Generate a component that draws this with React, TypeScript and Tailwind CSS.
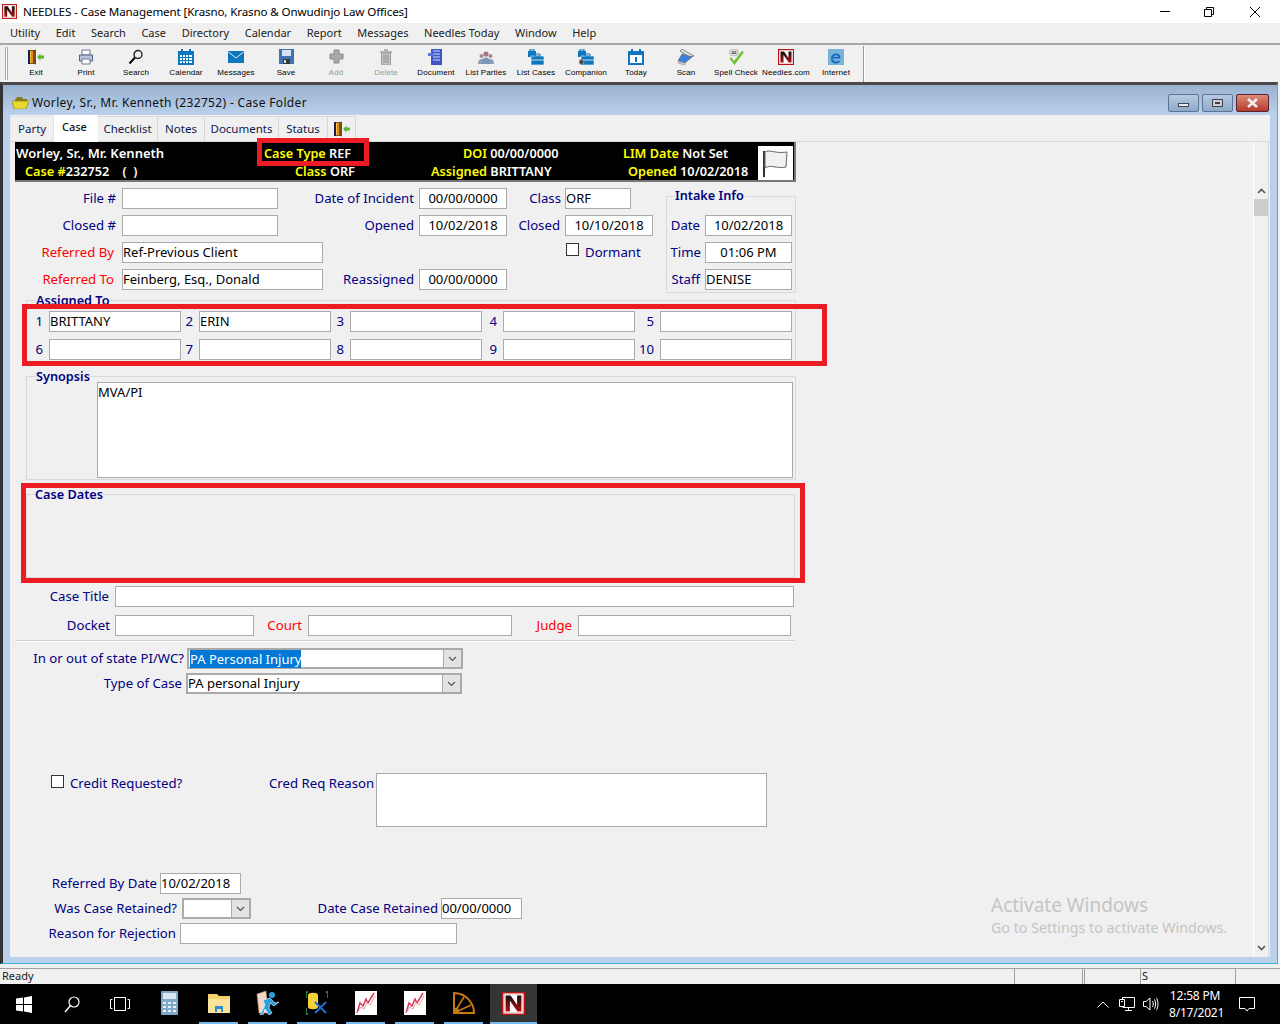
import type { ReactNode } from 'react';

const NAVY = 'text-[#000080]';

function NLogo({ size = 16 }: { size?: number }) {
  return (
    <svg width={size} height={size} viewBox="0 0 16 16" className="shrink-0">
      <defs>
        <linearGradient id="ng" x1="0" y1="0" x2="0" y2="1">
          <stop offset="0" stopColor="#111" />
          <stop offset="1" stopColor="#b40f0f" />
        </linearGradient>
      </defs>
      <rect x="0.5" y="0.5" width="15" height="15" fill="#fff" stroke="#b81414" />
      <rect x="1.5" y="1.5" width="13" height="13" fill="none" stroke="#e8b0b0" strokeWidth="0.6" />
      <path d="M2.5 2.5H6L10.5 9V2.5H13.5V13.5H10.8L5.5 6V13.5H2.5Z" fill="url(#ng)" />
    </svg>
  );
}

const Door = () => (
  <svg width="16" height="16" viewBox="0 0 16 16">
    <path d="M0 1H8V15H0Z" fill="#16204a" />
    <path d="M2 1.5H5.5V14.5H2Z" fill="#e08a1e" />
    <path d="M2 2H3V14H2Z" fill="#f2c24a" />
    <path d="M5.5 1.5L8 0.5V15.5L5.5 14.5Z" fill="#7a4a12" />
    <path d="M9 8L12.5 4.5V6.5H16V9.5H12.5V11.5Z" fill="#5cb832" />
  </svg>
);
const Printer = () => (
  <svg width="16" height="16" viewBox="0 0 16 16">
    <path d="M4 1H12V6H4Z" fill="#fff" stroke="#6d7896" />
    <path d="M1.5 6H14.5V12H1.5Z" fill="#b9c3dc" stroke="#55618a" />
    <path d="M4 10H12V15H4Z" fill="#fff" stroke="#6d7896" />
  </svg>
);
const Magnifier = () => (
  <svg width="16" height="16" viewBox="0 0 16 16">
    <circle cx="10" cy="5.5" r="4" fill="#e8f0f6" stroke="#222" strokeWidth="1.4" />
    <path d="M7 8.5L1.5 14.5" stroke="#111" strokeWidth="2.2" />
  </svg>
);
const CalendarIcon = ({ dots = true }: { dots?: boolean }) => (
  <svg width="16" height="16" viewBox="0 0 16 16">
    <path d="M0 2H16V16H0Z" fill="#0e76bc" />
    <path d="M3 0H5V3H3ZM11 0H13V3H11Z" fill="#0e76bc" />
    {dots ? (
      <path d="M2 6H4V8H2ZM5 6H7V8H5ZM8 6H10V8H8ZM11 6H14V8H11ZM2 9H4V11H2ZM5 9H7V11H5ZM8 9H10V11H8ZM11 9H14V11H11ZM2 12H4V14H2ZM5 12H7V14H5ZM8 12H10V14H8ZM11 12H14V14H11Z" fill="#fff" />
    ) : (
      <path d="M2 6H14V14H2Z" fill="#fff" />
    )}
    {!dots && <path d="M7 8H9V13H7Z" fill="#0e76bc" />}
  </svg>
);
const Envelope = () => (
  <svg width="16" height="12" viewBox="0 0 16 12" className="mt-[2px]">
    <path d="M0 0H16V12H0Z" fill="#0e76bc" />
    <path d="M0.5 1L8 7L15.5 1" fill="none" stroke="#d5ecf9" strokeWidth="1" />
  </svg>
);
const Floppy = () => (
  <svg width="15" height="15" viewBox="0 0 15 15">
    <path d="M0 0H15V15H0Z" fill="#3f73b5" />
    <path d="M3 1H12V7H3Z" fill="#d6e4f2" />
    <path d="M4 10H11V15H4Z" fill="#3a3a3a" />
    <path d="M5 11H7V14H5Z" fill="#ddd" />
  </svg>
);
const Plus = () => (
  <svg width="15" height="15" viewBox="0 0 15 15">
    <path d="M5 1H10V5H14V10H10V14H5V10H1V5H5Z" fill="#a8a8a8" stroke="#8c8c8c" />
  </svg>
);
const Trash = () => (
  <svg width="14" height="16" viewBox="0 0 14 16">
    <path d="M1 2H13V4H1ZM5 0H9V2H5Z" fill="#b5b5b5" />
    <path d="M2.5 4H11.5V16H2.5Z" fill="#c6c6c6" stroke="#9a9a9a" />
    <path d="M5 6V14M7 6V14M9 6V14" stroke="#8e8e8e" />
  </svg>
);
const DocIcon = () => (
  <svg width="16" height="16" viewBox="0 0 16 16">
    <path d="M3 0H14V16H3Z" fill="#3c55c4" />
    <path d="M5 2H12M5 5H12M5 8H12M5 11H12" stroke="#d4dcf5" />
    <path d="M0 4H6V7H0Z" fill="#5c76d8" />
  </svg>
);
const People = () => (
  <svg width="16" height="14" viewBox="0 0 16 14" className="mt-[2px]">
    <circle cx="3.5" cy="5" r="2" fill="#a08a96" />
    <circle cx="12.5" cy="5" r="2" fill="#a08a96" />
    <circle cx="8" cy="3" r="2.6" fill="#a87878" />
    <path d="M0 13C0 9 2 8 4 8S7 9 7 13Z" fill="#8ea2bd" />
    <path d="M9 13C9 9 11 8 12.5 8S16 9 16 13Z" fill="#8ea2bd" />
    <path d="M3.5 13C3.5 8 6 6.5 8 6.5S12.5 8 12.5 13Z" fill="#7d96b8" />
  </svg>
);
const Cases = ({ gear = false }: { gear?: boolean }) => (
  <svg width="16" height="16" viewBox="0 0 16 16">
    <path d="M0 2H8V8H0Z" fill="#0e76bc" />
    <path d="M2 0H6V2H2Z" fill="none" stroke="#0e76bc" />
    <path d="M3 7H16V16H3Z" fill="#0e76bc" stroke="#fff" strokeWidth="0.6" />
    <path d="M7 5H12V7H7Z" fill="none" stroke="#0e76bc" />
    <path d="M3 11H16" stroke="#bfe0f5" />
    {gear && <circle cx="3.5" cy="13" r="2.4" fill="#444" stroke="#999" strokeWidth="1" />}
  </svg>
);
const ScanIcon = () => (
  <svg width="16" height="16" viewBox="0 0 16 16">
    <path d="M4 0L16 7L12 8L2 2Z" fill="#dfe3ea" stroke="#555" strokeWidth="0.7" />
    <path d="M4 5L14 8L7 14L0 12Z" fill="#3d7fdc" stroke="#666" strokeWidth="0.7" />
    <path d="M0 12L7 14V16L0 14Z" fill="#cfd3da" stroke="#777" strokeWidth="0.5" />
  </svg>
);
const SpellIcon = () => (
  <svg width="16" height="16" viewBox="0 0 16 16">
    <ellipse cx="6" cy="3.5" rx="4.5" ry="3.3" fill="#eee" stroke="#999" strokeWidth="0.7" />
    <path d="M3.5 2.8H8.5M3.5 4.4H8.5" stroke="#444" strokeWidth="1" />
    <path d="M3 8L6 12L14 2L16 3L6.5 16L1.5 9.5Z" fill="#6cbf2f" />
  </svg>
);
const Ie = () => (
  <svg width="16" height="16" viewBox="0 0 16 16">
    <rect width="16" height="16" fill="#79b4d8" />
    <path d="M3 9.5H12.5C12.5 6 10.5 4.5 8 4.5S3 6.5 3 9.5C3 13 5.5 14.5 8 14.5C10 14.5 11.5 13.5 12.2 12H9.5C9 12.5 8.5 12.7 8 12.7C6.8 12.7 5.8 12 5.7 11H6ZM5.7 8C6 6.8 7 6.3 8 6.3S10 6.8 10.2 8Z" fill="#1467c5" />
  </svg>
);

const tools: { label: string; icon: ReactNode; off?: boolean }[] = [
  { label: 'Exit', icon: <Door /> },
  { label: 'Print', icon: <Printer /> },
  { label: 'Search', icon: <Magnifier /> },
  { label: 'Calendar', icon: <CalendarIcon /> },
  { label: 'Messages', icon: <Envelope /> },
  { label: 'Save', icon: <Floppy /> },
  { label: 'Add', icon: <Plus />, off: true },
  { label: 'Delete', icon: <Trash />, off: true },
  { label: 'Document', icon: <DocIcon /> },
  { label: 'List Parties', icon: <People /> },
  { label: 'List Cases', icon: <Cases /> },
  { label: 'Companion', icon: <Cases gear /> },
  { label: 'Today', icon: <CalendarIcon dots={false} /> },
  { label: 'Scan', icon: <ScanIcon /> },
  { label: 'Spell Check', icon: <SpellIcon /> },
  { label: 'Needles.com', icon: <NLogo /> },
  { label: 'Internet', icon: <Ie /> },
];

const menus = ['Utility', 'Edit', 'Search', 'Case', 'Directory', 'Calendar', 'Report', 'Messages', 'Needles Today', 'Window', 'Help'];

function Lbl({ className = '', children }: { className?: string; children: ReactNode }) {
  return <div className={`h-[21px] shrink-0 whitespace-nowrap text-right text-[13.2px] leading-[21px] ${NAVY} ${className}`}>{children}</div>;
}

function Field({ className = '', children }: { className?: string; children?: ReactNode }) {
  return <div className={`h-[21px] shrink-0 whitespace-nowrap border border-[#aaaaaa] bg-white leading-[19px] text-black ${className}`}>{children}</div>;
}

function Combo({ className = '', selected, children }: { className?: string; selected?: boolean; children?: ReactNode }) {
  return (
    <div className={`flex h-[21px] shrink-0 border-2 border-[#aaaaaa] bg-white leading-[17px] text-black ${className}`}>
      <div className="min-w-0 flex-1 whitespace-nowrap">
        {selected ? <span className="ml-px bg-[#0078d7] leading-[19px] text-white">{children}</span> : children}
      </div>
      <div className="flex w-[18px] items-center justify-center border-l border-[#aaaaaa] bg-[#e3e3e3]">
        <svg width="9" height="6" viewBox="0 0 9 6"><path d="M1 1L4.5 4.5L8 1" fill="none" stroke="#555" strokeWidth="1.2" /></svg>
      </div>
    </div>
  );
}

const Check = ({ className = '' }: { className?: string }) => (
  <div className={`h-[13px] w-[13px] shrink-0 border border-[#333] bg-white ${className}`} />
);

function Group({ title, className = '', legendClass = '', children }: { title: string; className?: string; legendClass?: string; children?: ReactNode }) {
  return (
    <fieldset className={`border border-[#d9d9d9] ${className}`}>
      <legend className={`h-[16px] text-[12.7px] font-semibold leading-[14px] ${NAVY} ${legendClass}`}>{title}</legend>
      {children}
    </fieldset>
  );
}

function AssignRow({ nums, names }: { nums: string[]; names: string[] }) {
  return (
    <div className="flex h-[21px]">
      <Lbl className="w-[16px]">{nums[0]}</Lbl>
      <Field className="ml-[6px] w-[132px]">{names[0]}</Field>
      <Lbl className="w-[12px]">{nums[1]}</Lbl>
      <Field className="ml-[6px] w-[132px]">{names[1]}</Field>
      <Lbl className="w-[13px]">{nums[2]}</Lbl>
      <Field className="ml-[6px] w-[132px]">{names[2]}</Field>
      <Lbl className="w-[15px]">{nums[3]}</Lbl>
      <Field className="ml-[6px] w-[132px]">{names[3]}</Field>
      <Lbl className="w-[19px]">{nums[4]}</Lbl>
      <Field className="ml-[6px] w-[132px]">{names[4]}</Field>
    </div>
  );
}

const WinBtn = ({ className, children }: { className: string; children: ReactNode }) => (
  <div className={`flex h-[18px] items-center justify-center rounded-[2px] border ${className}`}>{children}</div>
);

function TaskIcon({ active, on = true, children }: { active?: boolean; on?: boolean; children: ReactNode }) {
  return (
    <div className={`ml-[2px] flex h-[40px] w-[47px] flex-col items-center ${active ? 'bg-[#333537]' : ''}`}>
      <div className="flex min-h-0 flex-1 items-center justify-center">{children}</div>
      <div className={`h-[2px] ${active ? 'w-full' : 'w-[39px]'} ${on ? 'bg-[#76b9ed]' : ''}`} />
    </div>
  );
}

const Chart = () => (
  <svg width="22" height="24" viewBox="0 0 22 24">
    <rect width="22" height="24" fill="#fff" />
    <path d="M2 22L5 12L8 15L11 8L13 12L19 2" fill="none" stroke="#d63a52" strokeWidth="1.5" />
    <path d="M2 22L6 16L9 18L12 11L15 14L20 5" fill="none" stroke="#e79aa8" strokeWidth="1" />
  </svg>
);

export default function App() {
  return (
    <div className="relative flex h-[1024px] w-[1280px] flex-col overflow-hidden bg-[#f0f0f0] font-['Noto_Sans',sans-serif] text-[13px]">
      {/* main window title */}
      <div className="flex h-[23px] shrink-0 items-center bg-white pl-[2px] text-[11.6px] text-black">
        <NLogo size={15} />
        <span className="ml-[6px] tracking-[-0.13px]">NEEDLES - Case Management [Krasno, Krasno &amp; Onwudinjo Law Offices]</span>
        <div className="ml-auto flex items-center pr-[20px]">
          <div className="h-px w-[10px] bg-black" />
          <svg width="10" height="10" viewBox="0 0 10 10" className="ml-[34px]"><path d="M2.5 2.5V.5H9.5V7.5H7.5M.5 2.5H7.5V9.5H.5Z" fill="none" stroke="#000" /></svg>
          <svg width="10" height="10" viewBox="0 0 10 10" className="ml-[36px]"><path d="M0 0L10 10M10 0L0 10" stroke="#000" /></svg>
        </div>
      </div>
      {/* menu */}
      <div className="flex h-[20px] shrink-0 items-center gap-[15.6px] pl-[10px] text-[11px] text-[#222]">
        {menus.map((m) => (
          <span key={m}>{m}</span>
        ))}
      </div>
      {/* toolbar */}
      <div className="flex h-[39px] shrink-0 border-t-2 border-[#a8a8a8] pl-[5px]">
        <div className="my-[2px] w-[3px] border-x border-[#aaa] bg-white" />
        <div className="ml-[3px] flex w-[850px]">
          {tools.map((t) => (
            <div key={t.label} className="flex w-[50px] flex-col items-center pt-[4px]">
              <div className="flex h-[17px] items-start">{t.icon}</div>
              <div className={`mt-[2px] whitespace-nowrap font-['Liberation_Sans',sans-serif] text-[8px] leading-[10px] tracking-[0.1px] ${t.off ? 'text-[#999]' : 'text-black'}`}>{t.label}</div>
            </div>
          ))}
        </div>
        <div className="ml-[2px] mt-[1px] h-[36px] w-[2px] border-x border-l-[#999] border-r-white" />
      </div>
      {/* MDI child */}
      <div className="mr-[2px] flex min-h-0 flex-1 flex-col border-b border-l-[3px] border-r border-t-[3px] border-b-[#3fb5d6] border-l-[#333] border-r-[#3fb5d6] border-t-[#4a4a4a] bg-[#b9d1ea]">
        <div className="flex h-[30px] shrink-0 items-start bg-gradient-to-b from-[#9ab2d1] to-[#b9d1ea] pl-[9px] pr-[8px] pt-[9px]">
          <svg width="17" height="12" viewBox="0 0 17 12" className="mt-[3px]">
            <path d="M3 3L5 0H10L11 2H15V4H3Z" fill="#8a7a1e" />
            <path d="M0 4H17L14 12H2Z" fill="#e6d92b" stroke="#8a7a1e" strokeWidth="0.6" />
          </svg>
          <span className="ml-[3px] text-[12px] leading-[18px] tracking-[0.34px] text-[#111]">Worley, Sr., Mr. Kenneth (232752) - Case Folder</span>
          <div className="ml-auto flex gap-[3px]">
            <WinBtn className="w-[31px] border-[#5d7390] bg-gradient-to-b from-[#b6cbe3] to-[#8ea9c9]"><div className="mt-[3px] h-[4px] w-[11px] border border-[#444] bg-[#eee]" /></WinBtn>
            <WinBtn className="w-[31px] border-[#5d7390] bg-gradient-to-b from-[#b6cbe3] to-[#8ea9c9]"><div className="flex h-[8px] w-[11px] items-center justify-center border border-[#444] bg-[#ccd]"><div className="h-[2px] w-[5px] border border-[#444]" /></div></WinBtn>
            <WinBtn className="w-[33px] border-[#5a2230] bg-gradient-to-b from-[#dc8a78] to-[#b5382a]">
              <svg width="13" height="10" viewBox="0 0 13 10"><path d="M2 1L11 9M11 1L2 9" stroke="#eee" strokeWidth="2.6" /></svg>
            </WinBtn>
          </div>
        </div>

        <div className="mx-[7px] mb-[6px] flex min-h-0 flex-1 flex-col bg-[#f0f0f0]">
          {/* tabs */}
          <div className="flex h-[27px] shrink-0 items-end border-b border-[#d9d9d9] pr-[1px] text-[11.5px] text-[#10184a]">
            <div className="flex h-[25px] w-[44px] items-center border border-b-0 border-[#e4e4e4] pl-[7px]">Party</div>
            <div className="z-10 -mb-px flex h-[27px] w-[44px] bg-white pl-[8px] pt-[4px] text-[11px] font-medium text-[#111]">Case</div>
            <div className="flex h-[25px] w-[60px] items-center justify-center border-r border-t border-[#d9d9d9]">Checklist</div>
            <div className="flex h-[25px] w-[47px] items-center justify-center border-r border-t border-[#d9d9d9]">Notes</div>
            <div className="flex h-[25px] w-[74px] items-center justify-center border-r border-t border-[#d9d9d9]">Documents</div>
            <div className="flex h-[25px] w-[49px] items-center justify-center border-r border-t border-[#d9d9d9]">Status</div>
            <div className="flex h-[25px] w-[28px] items-center justify-center border-r border-t border-[#d9d9d9]"><Door /></div>
          </div>

          <div className="mr-[1px] flex min-h-0 flex-1 border-r border-[#d9d9d9]">
            <div className="min-w-0 flex-1 pl-[5px]">
              {/* header banner */}
              <div className="flex h-[40px] w-[781px] border-b-2 border-r-2 border-[#777] bg-black text-[12.7px] font-semibold leading-[18px] text-white">
                <div className="w-[743px] pt-[2px]">
                  <div className="flex h-[18px]">
                    <span className="ml-px w-[248px] text-[13px]">Worley, Sr., Mr. Kenneth</span>
                    <span className="w-[199px]"><span className="text-[#ffff00]">Case Type</span> REF</span>
                    <span className="w-[160px]"><span className="text-[#ffff00]">DOI</span> 00/00/0000</span>
                    <span><span className="text-[#ffff00]">LIM Date</span> Not Set</span>
                  </div>
                  <div className="flex h-[18px]">
                    <span className="ml-[10px] w-[270px] whitespace-pre"><span className="text-[#ffff00]">Case #</span>232752    (  )</span>
                    <span className="w-[136px]"><span className="text-[#ffff00]">Class</span> ORF</span>
                    <span className="w-[197px]"><span className="text-[#ffff00]">Assigned</span> BRITTANY</span>
                    <span><span className="text-[#ffff00]">Opened</span> 10/02/2018</span>
                  </div>
                </div>
                <div className="mt-[4px] flex h-[34px] w-[35px] items-center justify-center bg-white">
                  <svg width="27" height="29" viewBox="0 0 27 29">
                    <path d="M2 2V28" stroke="#333" strokeWidth="2" />
                    <path d="M3 3C8 0 13 5 25 3L24 18C14 20 9 15 3 19Z" fill="#f1f1f1" stroke="#666" />
                  </svg>
                </div>
              </div>

              {/* top fields + intake */}
              <div className="mt-[6px] flex h-[104px]">
                <div className="flex w-[651px] flex-col gap-[6px]">
                  <div className="flex">
                    <Lbl className="w-[101px]">File #</Lbl>
                    <Field className="ml-[6px] w-[156px]" />
                    <Lbl className="w-[136px]">Date of Incident</Lbl>
                    <Field className="ml-[5px] w-[88px] text-center">00/00/0000</Field>
                    <Lbl className="w-[54px]">Class</Lbl>
                    <Field className="ml-[4px] w-[66px]">ORF</Field>
                  </div>
                  <div className="flex">
                    <Lbl className="w-[101px]">Closed #</Lbl>
                    <Field className="ml-[6px] w-[156px]" />
                    <Lbl className="w-[136px]">Opened</Lbl>
                    <Field className="ml-[5px] w-[88px] text-center">10/02/2018</Field>
                    <Lbl className="w-[53px]">Closed</Lbl>
                    <Field className="ml-[5px] w-[88px] text-center">10/10/2018</Field>
                  </div>
                  <div className="flex">
                    <Lbl className="w-[99px] !text-[#ff0000]">Referred By</Lbl>
                    <Field className="ml-[8px] w-[201px]">Ref-Previous Client</Field>
                    <Check className="ml-[243px] mt-px" />
                    <Lbl className="ml-[6px]">Dormant</Lbl>
                  </div>
                  <div className="flex">
                    <Lbl className="w-[99px] !text-[#ff0000]">Referred To</Lbl>
                    <Field className="ml-[8px] w-[201px]">Feinberg, Esq., Donald</Field>
                    <Lbl className="w-[91px]">Reassigned</Lbl>
                    <Field className="ml-[5px] w-[88px] text-center">00/00/0000</Field>
                  </div>
                </div>
                <Group title="Intake Info" className="h-[105px] w-[130px] shrink-0" legendClass="ml-[7px] px-px">
                  <div className="mt-[11px] flex flex-col gap-[6px]">
                    <div className="flex">
                      <Lbl className="w-[33px]">Date</Lbl>
                      <Field className="ml-[5px] w-[87px] text-center">10/02/2018</Field>
                    </div>
                    <div className="flex">
                      <Lbl className="w-[34px]">Time</Lbl>
                      <Field className="ml-[4px] w-[87px] text-center">01:06 PM</Field>
                    </div>
                    <div className="flex">
                      <Lbl className="w-[33px]">Staff</Lbl>
                      <Field className="ml-[5px] w-[87px]">DENISE</Field>
                    </div>
                  </div>
                </Group>
              </div>

              {/* assigned to */}
              <Group title="Assigned To" className="ml-[11px] h-[73px] w-[770px]" legendClass="ml-[9px] pt-px">
                <div className="mt-[3px] flex flex-col gap-[7px]">
                  <AssignRow nums={['1', '2', '3', '4', '5']} names={['BRITTANY', 'ERIN', '', '', '']} />
                  <AssignRow nums={['6', '7', '8', '9', '10']} names={['', '', '', '', '']} />
                </div>
              </Group>

              {/* synopsis */}
              <Group title="Synopsis" className="ml-[11px] mt-[4px] h-[111px] w-[770px]" legendClass="ml-[9px] !h-[14px]">
                <Field className="-mt-[1px] ml-[70px] !h-[96px] w-[696px]">MVA/PI</Field>
              </Group>

              {/* case dates */}
              <Group title="Case Dates" className="ml-[11px] mt-[7px] h-[91px] w-[769px]" legendClass="ml-[8px] !h-[14px]" />

              <div className="mt-[8px] flex">
                <Lbl className="w-[94px]">Case Title</Lbl>
                <Field className="ml-[6px] w-[679px]" />
              </div>
              <div className="mt-[8px] flex">
                <Lbl className="w-[95px]">Docket</Lbl>
                <Field className="ml-[5px] w-[139px]" />
                <Lbl className="w-[48px] !text-[#ff0000]">Court</Lbl>
                <Field className="ml-[6px] w-[204px]" />
                <Lbl className="w-[60px] !text-[#ff0000]">Judge</Lbl>
                <Field className="ml-[6px] w-[213px]" />
              </div>
              <div className="mt-[4px] h-[2px] w-[779px] border-y border-y-[#cfcfcf] border-b-white" />

              <div className="mt-[6px] flex">
                <Lbl className="w-[169px]">In or out of state PI/WC?</Lbl>
                <Combo className="ml-[3px] w-[276px]" selected>PA Personal Injury</Combo>
              </div>
              <div className="mt-[4px] flex">
                <Lbl className="w-[167px]">Type of Case</Lbl>
                <Combo className="ml-[4px] w-[276px]">PA personal Injury</Combo>
              </div>

              <div className="mt-[79px] flex items-start">
                <Check className="ml-[36px] mt-[2px]" />
                <Lbl className="ml-[6px] w-[115px] !text-left">Credit Requested?</Lbl>
                <Lbl className="ml-[84px] w-[104px]">Cred Req Reason</Lbl>
                <Field className="ml-[3px] !h-[54px] w-[391px]" />
              </div>

              <div className="mt-[46px] flex">
                <Lbl className="w-[142px]">Referred By Date</Lbl>
                <Field className="ml-[3px] w-[81px]">10/02/2018</Field>
              </div>
              <div className="mt-[4px] flex">
                <Lbl className="w-[162px]">Was Case Retained?</Lbl>
                <Combo className="ml-[5px] w-[69px]" />
                <Lbl className="w-[187px]">Date Case Retained</Lbl>
                <Field className="ml-[3px] w-[81px]">00/00/0000</Field>
              </div>
              <div className="mt-[4px] flex">
                <Lbl className="w-[161px]">Reason for Rejection</Lbl>
                <Field className="ml-[4px] w-[277px]" />
              </div>
            </div>

            {/* scrollbar */}
            <div className="flex w-[15px] shrink-0 flex-col border-l border-white pt-[40px]">
              <div className="flex h-[17px] items-center justify-center">
                <svg width="9" height="6" viewBox="0 0 9 6"><path d="M1 5L4.5 1.5L8 5" fill="none" stroke="#555" strokeWidth="1.6" /></svg>
              </div>
              <div className="h-[17px] bg-[#cdcdcd]" />
              <div className="mt-auto flex h-[17px] items-center justify-center pb-[2px]">
                <svg width="9" height="6" viewBox="0 0 9 6"><path d="M1 1L4.5 4.5L8 1" fill="none" stroke="#555" strokeWidth="1.6" /></svg>
              </div>
            </div>
          </div>
        </div>
      </div>

      {/* status bar */}
      <div className="flex h-[20px] shrink-0 pt-[4px] text-[11px] leading-[14px] text-[#222]">
        <div className="w-[1014px] border-t border-[#a0a0a0] pl-[2px]">Ready</div>
        <div className="w-[68px] border-l border-t border-[#a0a0a0]" />
        <div className="w-[2px] border-l border-t border-[#a0a0a0]" />
        <div className="w-[56px] border-l border-t border-[#a0a0a0]" />
        <div className="w-[95px] border-l border-t border-[#a0a0a0] pl-[1px]">S</div>
        <div className="flex-1 border-l border-t border-[#a0a0a0]" />
      </div>

      {/* taskbar */}
      <div className="flex h-[40px] shrink-0 bg-black text-white">
        <div className="flex w-[48px] items-center justify-center">
          <svg width="16" height="17" viewBox="0 0 16 17"><path d="M0 2.5L7 1.5V8H0ZM8 1.4L16 0V8H8ZM0 9H7V15.5L0 14.5ZM8 9H16V17L8 15.6Z" fill="#fff" /></svg>
        </div>
        <div className="flex w-[48px] items-center justify-center">
          <svg width="16" height="18" viewBox="0 0 16 18"><circle cx="10" cy="7" r="5" fill="none" stroke="#fff" strokeWidth="1.2" /><path d="M6.5 10.5L1 17" stroke="#fff" strokeWidth="1.4" /></svg>
        </div>
        <div className="flex w-[48px] items-center justify-center">
          <svg width="20" height="14" viewBox="0 0 20 14"><path d="M4.5.5H15.5V13.5H4.5ZM2.5 2.5H.5V11.5H2.5M17.5 2.5H19.5V11.5H17.5" fill="none" stroke="#fff" /></svg>
        </div>
        <div className="flex">
          <TaskIcon on={false}>
            <svg width="17" height="24" viewBox="0 0 17 24">
              <rect width="17" height="24" rx="1" fill="#7fa9c7" />
              <rect x="2" y="2" width="13" height="6" fill="#d9e8f2" />
              <path d="M2 11H5V13H2ZM7 11H10V13H7ZM12 11H15V13H12ZM2 15H5V17H2ZM7 15H10V17H7ZM12 15H15V17H12ZM2 19H5V21H2ZM7 19H10V21H7ZM12 19H15V21H12Z" fill="#eaf2f7" />
            </svg>
          </TaskIcon>
          <TaskIcon>
            <svg width="22" height="20" viewBox="0 0 22 20">
              <path d="M0 1H9L11 3H22V20H0Z" fill="#f6d36a" />
              <path d="M0 6H22V20H0Z" fill="#fbe39a" />
              <path d="M7 13H15V19H13V16H9V19H7Z" fill="#2f8fd6" />
            </svg>
          </TaskIcon>
          <TaskIcon>
            <svg width="24" height="24" viewBox="0 0 24 24">
              <path d="M1 3L10 0L12 22H3Z" fill="#efd9c6" stroke="#c98f6e" strokeWidth="0.6" />
              <circle cx="16" cy="4" r="3" fill="#2a9fe0" />
              <path d="M4 24L9 14L7 9L14 7L19 12L23 11L18 15L14 12L13 17L16 22L13 24L9 18L7 24Z" fill="#2a9fe0" stroke="#fff" strokeWidth="0.6" />
            </svg>
          </TaskIcon>
          <TaskIcon>
            <svg width="22" height="24" viewBox="0 0 22 24">
              <path d="M0 7V1H2M20 1H22V7M0 17V23H2" fill="none" stroke="#2f9a4a" strokeWidth="1.5" />
              <path d="M2 4C2 1 12 1 12 4V16C12 19 2 19 2 16Z" fill="#f6d23a" />
              <path d="M9 22L20 11M20 22L9 11" stroke="#1b6fd0" strokeWidth="2" />
            </svg>
          </TaskIcon>
          <TaskIcon><Chart /></TaskIcon>
          <TaskIcon><Chart /></TaskIcon>
          <TaskIcon>
            <svg width="24" height="24" viewBox="0 0 24 24">
              <path d="M2 22V2C13 2 22 11 22 22Z" fill="none" stroke="#c67a12" strokeWidth="2" />
              <path d="M2 22L12 6M2 22L19 14" stroke="#c67a12" strokeWidth="1.6" />
              <circle cx="4" cy="20" r="3" fill="#c67a12" />
            </svg>
          </TaskIcon>
          <div className="ml-[1px]">
            <TaskIcon active><NLogo size={23} /></TaskIcon>
          </div>
        </div>
        <div className="ml-auto flex items-center pr-[25px]">
          <svg width="12" height="7" viewBox="0 0 12 7"><path d="M.5 6.5L6 1L11.5 6.5" fill="none" stroke="#fff" /></svg>
          <svg width="16" height="14" viewBox="0 0 16 14" className="ml-[10px]"><path d="M3.5 2.5V.5H15.5V10.5H3.5M.5 2.5H5.5V9.5H.5ZM9.5 10.5V13M6 13.5H13M2 4.5H4" fill="none" stroke="#fff" /></svg>
          <svg width="16" height="14" viewBox="0 0 16 14" className="ml-[8px]"><path d="M.5 4.5H3L7 1V13L3 9.5H.5ZM9.5 4C10.5 6 10.5 8 9.5 10M11.5 2.5C13 5 13 9 11.5 11.5M13.5 1C15.5 4.5 15.5 9.5 13.5 13" fill="none" stroke="#fff" /></svg>
          <div className="ml-[10px] w-[52px] whitespace-nowrap text-center text-[12px] leading-[17px] tracking-[-0.2px]">
            <div>12:58 PM</div>
            <div>8/17/2021</div>
          </div>
          <svg width="16" height="15" viewBox="0 0 16 15" className="ml-[18px]"><path d="M.5.5H15.5V11.5H10L8 14L6 11.5H.5Z" fill="none" stroke="#fff" /></svg>
        </div>
      </div>

      {/* activation watermark */}
      <div className="pointer-events-none absolute left-[991px] top-[892px] text-[#c4c4c4]">
        <div className="text-[19px] leading-[26px]">Activate Windows</div>
        <div className="text-[14.25px] leading-[20px]">Go to Settings to activate Windows.</div>
      </div>

      {/* red annotation boxes */}
      <div className="pointer-events-none absolute left-[257px] top-[138px] h-[28px] w-[112px] border-[5px] border-[#ed1c24]" />
      <div className="pointer-events-none absolute left-[22px] top-[304px] h-[62px] w-[805px] border-[5px] border-[#ed1c24]" />
      <div className="pointer-events-none absolute left-[21px] top-[483px] h-[100px] w-[784px] border-[5px] border-[#ed1c24]" />
    </div>
  );
}
